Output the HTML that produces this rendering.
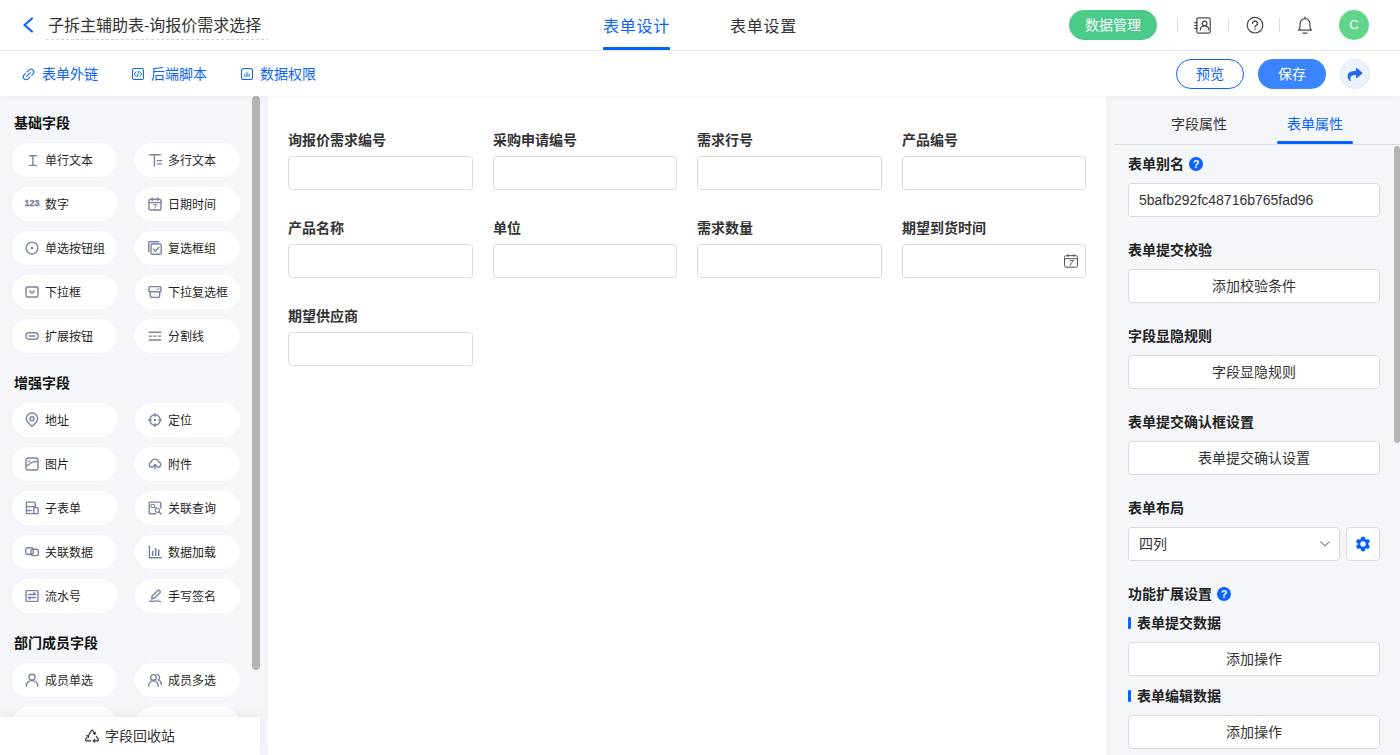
<!DOCTYPE html>
<html lang="zh-CN">
<head>
<meta charset="utf-8">
<title>表单设计</title>
<style>
*{box-sizing:border-box;margin:0;padding:0}
html,body{width:1400px;height:755px;overflow:hidden;background:#fff}
body{position:relative;font-family:"Liberation Sans","Noto Sans CJK SC",sans-serif;font-size:14px;color:#333;line-height:1}
.abs{position:absolute}
svg{display:block;overflow:visible}
/* header */
#hdr{position:absolute;left:0;top:0;width:1400px;height:51px;background:#fff;border-bottom:1px solid #ececec}
#title{position:absolute;left:48px;top:1px;height:50px;line-height:50px;font-size:16px;color:#333;white-space:nowrap}
#title-line{position:absolute;left:46px;top:39px;width:222px;height:1px;background:repeating-linear-gradient(90deg,#d4d4d4 0,#d4d4d4 3px,transparent 3px,transparent 5px)}
.tab{position:absolute;top:2px;height:50px;line-height:50px;font-size:16px;white-space:nowrap;letter-spacing:.75px}
.tab.on{color:#0a62ff}
#tabline{position:absolute;left:603px;top:47px;width:67px;height:3px;background:#0062ff;border-radius:1px}
#btn-data{position:absolute;left:1069px;top:10px;width:88px;height:30px;border-radius:15px;background:#4bcb8a;color:#fff;font-size:14px;line-height:30px;text-align:center}
.vsep{position:absolute;top:18px;width:1px;height:14px;background:#dcdcdc}
#avatar{position:absolute;left:1339px;top:10px;width:30px;height:30px;border-radius:50%;background:#61d68b;color:#fff;font-size:13px;line-height:30px;text-align:center}
/* toolbar */
#bar{position:absolute;left:0;top:51px;width:1400px;height:45px;background:#fff;box-shadow:0 1px 5px rgba(0,0,0,.05);z-index:5}
.lnk{position:absolute;top:1px;height:45px;line-height:45px;font-size:14px;color:#0a62ff;white-space:nowrap}
.lnk svg{position:absolute;top:16px}
#btn-prev{position:absolute;left:1176px;top:8px;width:68px;height:30px;border-radius:15px;border:1px solid #0a62ff;color:#0a62ff;font-size:14px;line-height:28px;text-align:center;background:#fff}
#btn-save{position:absolute;left:1258px;top:8px;width:68px;height:30px;border-radius:15px;background:#3a84ff;color:#fff;font-size:14px;line-height:30px;text-align:center}
#btn-share{position:absolute;left:1340px;top:8px;width:30px;height:30px;border-radius:50%;background:#ecf2ff;border:1px solid #dbe6ff}
/* left */
#left{position:absolute;left:0;top:96px;width:260px;height:659px;background:#f5f6fa;overflow:hidden}
#lscroll{position:absolute;left:252px;top:0;width:8px;height:574px;background:#b3b3b3;border-radius:4px}
.gt{position:absolute;left:14px;font-size:14px;font-weight:bold;color:#111;white-space:nowrap;height:20px;line-height:20px}
.pill{position:absolute;width:105px;height:34px;border-radius:17px;background:#fff;font-size:12px;line-height:36px;color:#1f1f1f;white-space:nowrap;padding-left:33px}
.pill.c1{left:12px}.pill.c2{left:135px}
.pill svg{position:absolute;left:13px;top:10px}
#recycle{position:absolute;left:0;top:717px;z-index:3;width:260px;height:38px;background:#fff;box-shadow:0 -3px 8px rgba(0,0,0,.06);font-size:14px;line-height:38px;color:#333}
/* canvas */
#gap{position:absolute;left:260px;top:96px;width:8px;height:659px;background:#f5f6fa}
#canvas{position:absolute;left:268px;top:96px;width:838px;height:659px;background:#fff}
.fl{position:absolute;font-size:14px;font-weight:bold;color:#333;white-space:nowrap;height:20px;line-height:20px}
.fi{position:absolute;width:185px;height:34px;border:1px solid #dbdbdb;border-radius:4px;background:#fff}
/* right */
#right{position:absolute;left:1106px;top:96px;width:294px;height:659px;background:#f5f6fa;overflow:hidden}
.rtab{position:absolute;top:18px;height:20px;line-height:20px;font-size:14px;white-space:nowrap;color:#333}
.rl{position:absolute;left:22px;font-size:14px;font-weight:bold;color:#222;white-space:nowrap;height:20px;line-height:20px}
.rb{position:absolute;left:22px;width:252px;height:34px;border:1px solid #dbdbdb;border-radius:4px;background:#fff;font-size:14px;line-height:32px;text-align:center;color:#333;white-space:nowrap}
.q{position:absolute;width:14px;height:14px;border-radius:50%;background:#0a62ff;color:#fff;font-size:11px;font-weight:bold;line-height:14px;text-align:center}
.sub{position:absolute;left:22px;font-size:14px;font-weight:bold;color:#222;white-space:nowrap;height:20px;line-height:20px;padding-left:9px}
.sub:before{content:"";position:absolute;left:0;top:4px;width:3px;height:12px;background:#0a62ff;border-radius:1px}
</style>
</head>
<body>
<!-- HEADER -->
<div id="hdr">
  <svg class="abs" style="left:22px;top:17px" width="12" height="16" viewBox="0 0 12 16"><path d="M10 1.5 L2.5 8 L10 14.5" fill="none" stroke="#0a62ff" stroke-width="2.2" stroke-linecap="round" stroke-linejoin="round"/></svg>
  <div id="title">子拆主辅助表-询报价需求选择</div>
  <div id="title-line"></div>
  <div class="tab on" style="left:603px">表单设计</div>
  <div class="tab" style="left:730px">表单设置</div>
  <div id="tabline"></div>
  <div id="btn-data">数据管理</div>
  <div class="vsep" style="left:1177px"></div>
  <div class="vsep" style="left:1228px"></div>
  <div class="vsep" style="left:1279px"></div>
<svg class="abs" style="left:1194px;top:17px" width="17" height="17" viewBox="0 0 17 17" fill="none" stroke="#4a4a4a" stroke-width="1.2" stroke-linecap="round" stroke-linejoin="round"><rect x="2.8" y="0.8" width="13.4" height="15.4" rx="1.8"/><path d="M0.6 5.7h2.6M0.6 8.5h2.6M0.6 11.3h2.6"/><circle cx="10.6" cy="6.4" r="2.3"/><path d="M6.4 12.8c0-2.4 1.8-3.8 4.2-3.8s4.2 1.4 4.2 3.8"/></svg>
<svg class="abs" style="left:1246px;top:16px" width="18" height="18" viewBox="0 0 18 18" fill="none" stroke="#4a4a4a" stroke-width="1.2" stroke-linecap="round" stroke-linejoin="round"><circle cx="9" cy="9.2" r="7.8"/><path d="M6.6 7.3a2.4 2.4 0 1 1 3.5 2.2c-0.8 0.4-1.1 0.9-1.1 1.6" stroke-width="1.4"/><circle cx="9" cy="13.3" r="0.8" fill="#4a4a4a" stroke="none"/></svg>
<svg class="abs" style="left:1297px;top:15px" width="16" height="20" viewBox="0 0 16 20" fill="none" stroke="#4a4a4a" stroke-width="1.2" stroke-linecap="round" stroke-linejoin="round"><path d="M1.6 15.2h12.8c-1.1-1.2-1.5-2.4-1.5-4.2V8.6a4.9 4.9 0 0 0-9.8 0V11c0 1.8-0.4 3-1.5 4.2z"/><path d="M8 3.4V1.8M6 18.2h4"/></svg>
  <div id="avatar">C</div>
</div>
<!-- TOOLBAR -->
<div id="bar">
  <div class="lnk" style="left:42px"><svg style="left:-20px" width="13" height="13" viewBox="0 0 14 14" fill="none" stroke="#0a62ff" stroke-width="1.1" stroke-linecap="round" stroke-linejoin="round"><path d="M5.4 4.2l2-2a3.1 3.1 0 0 1 4.4 4.4l-1.4 1.4M8.6 9.8l-2 2a3.1 3.1 0 0 1-4.4-4.4l1.4-1.4"/><path d="M4.9 9.1l4.2-4.2"/></svg>表单外链</div>
  <div class="lnk" style="left:151px"><svg style="left:-19px" width="12" height="12" viewBox="0 0 13 13" fill="none" stroke="#0a62ff" stroke-width="1.1" stroke-linecap="round" stroke-linejoin="round"><rect x="0.6" y="0.6" width="11.8" height="11.8" rx="1.6"/><path d="M4.5 4.2L2.3 6.5l2.2 2.3M8.5 4.2l2.2 2.3-2.2 2.3M7.3 3.6L5.7 9.4" stroke-width="1"/></svg>后端脚本</div>
  <div class="lnk" style="left:260px"><svg style="left:-19px" width="12" height="12" viewBox="0 0 13 13" fill="none" stroke="#0a62ff" stroke-width="1.1" stroke-linecap="round" stroke-linejoin="round"><rect x="0.6" y="0.6" width="11.8" height="11.8" rx="2.2"/><path d="M4.2 9.2V7M6.5 9.2V5M8.8 9.2V6.4"/></svg>数据权限</div>
  <div id="btn-prev">预览</div>
  <div id="btn-save">保存</div>
  <div id="btn-share"><svg style="position:absolute;left:6px;top:8px" width="16" height="13" viewBox="0 0 512 448"><path fill="#2468f2" d="M503.691 157.836L327.687 5.851C312.281-7.454 288 3.347 288 24.015v80.053C127.371 105.907 0 138.1 0 290.326c0 61.441 39.581 122.309 83.333 154.132 13.653 9.931 33.111-2.533 28.077-18.631C66.066 280.814 132.917 242.316 288 240.085V328c0 20.7 24.3 31.453 39.687 18.164l176.004-152c11.071-9.562 11.086-26.753 0-36.328z"/></svg></div>
</div>
<!-- LEFT -->
<div id="left">
  <div class="gt" style="top:17px">基础字段</div>
  <div class="pill c1" style="top:47px"><svg width="14" height="14" viewBox="0 0 14 14" fill="none" stroke="#7a83a3" stroke-width="1.4" stroke-linecap="round" stroke-linejoin="round"><path d="M4.5 2.7h6.8M4.5 12.4h6.8M7.9 2.7v9.7"/></svg>单行文本</div>
  <div class="pill c2" style="top:47px"><svg width="14" height="14" viewBox="0 0 14 14" fill="none" stroke="#7a83a3" stroke-width="1.4" stroke-linecap="round" stroke-linejoin="round"><path d="M1.8 1.8h10.6M6.4 1.8v11.2M9.2 7.6h4.4M9.2 10.9h4.4"/></svg>多行文本</div>
  <div class="pill c1" style="top:91px"><svg width="18" height="14" viewBox="0 0 18 14" style="left:12px"><text x="0.4" y="9.4" style="font:bold 9px 'Liberation Sans',sans-serif" fill="#7a83a3" stroke="#7a83a3" stroke-width="0.35">123</text></svg>数字</div>
  <div class="pill c2" style="top:91px"><svg width="14" height="14" viewBox="0 0 14 14" fill="none" stroke="#7a83a3" stroke-width="1.4" stroke-linecap="round" stroke-linejoin="round"><rect x="1" y="2.2" width="12" height="10.8" rx="1.8"/><path d="M1 5.6h12M4.2 0.9v2.6M9.8 0.9v2.6"/><path d="M5.8 7.6h2.6l-1.7 3.6" stroke-width="1"/></svg>日期时间</div>
  <div class="pill c1" style="top:135px"><svg width="14" height="14" viewBox="0 0 14 14" fill="none" stroke="#7a83a3" stroke-width="1.4" stroke-linecap="round" stroke-linejoin="round"><circle cx="7" cy="7" r="5.9"/><circle cx="7" cy="7" r="1.3" fill="#7a83a3" stroke="none"/></svg>单选按钮组</div>
  <div class="pill c2" style="top:135px"><svg width="14" height="14" viewBox="0 0 14 14" fill="none" stroke="#7a83a3" stroke-width="1.4" stroke-linecap="round" stroke-linejoin="round"><rect x="3" y="3" width="10.2" height="10.2" rx="1.2"/><path d="M0.8 10.6V1.8a1 1 0 0 1 1-1h8.8"/><path d="M5.4 8.1l2.1 2.1 3.4-4"/></svg>复选框组</div>
  <div class="pill c1" style="top:179px"><svg width="14" height="14" viewBox="0 0 14 14" fill="none" stroke="#7a83a3" stroke-width="1.4" stroke-linecap="round" stroke-linejoin="round"><rect x="1" y="2" width="12" height="10" rx="1.2"/><path d="M4.8 6l2.2 2.2L9.2 6"/></svg>下拉框</div>
  <div class="pill c2" style="top:179px"><svg width="14" height="14" viewBox="0 0 14 14" fill="none" stroke="#7a83a3" stroke-width="1.4" stroke-linecap="round" stroke-linejoin="round"><rect x="1" y="1.6" width="12" height="5.2" rx="1"/><path d="M2.3 6.8v3.6a2 2 0 0 0 2 2h5.4a2 2 0 0 0 2-2V6.8"/><path d="M8.6 3.9l1.1 1.1 1.8-2" stroke-width="1"/></svg>下拉复选框</div>
  <div class="pill c1" style="top:223px"><svg width="14" height="14" viewBox="0 0 14 14" fill="none" stroke="#7a83a3" stroke-width="1.4" stroke-linecap="round" stroke-linejoin="round"><rect x="0.8" y="3.8" width="12.4" height="6.4" rx="3.2"/><path d="M4 7h6"/></svg>扩展按钮</div>
  <div class="pill c2" style="top:223px"><svg width="14" height="14" viewBox="0 0 14 14" fill="none" stroke="#7a83a3" stroke-width="1.4" stroke-linecap="round" stroke-linejoin="round"><path d="M1.2 3.2h11.6M1.2 11h11.6M1.2 7.1h2.4M5.8 7.1h2.4M10.4 7.1h2.4"/></svg>分割线</div>
  <div class="gt" style="top:277px">增强字段</div>
  <div class="pill c1" style="top:307px"><svg width="14" height="14" viewBox="0 0 14 14" fill="none" stroke="#7a83a3" stroke-width="1.4" stroke-linecap="round" stroke-linejoin="round"><path d="M7 13.5C3.2 10 1.3 7.9 1.3 5.7a5.7 5.7 0 0 1 11.4 0C12.7 7.9 10.8 10 7 13.5z"/><circle cx="7" cy="5.7" r="2"/></svg>地址</div>
  <div class="pill c2" style="top:307px"><svg width="14" height="14" viewBox="0 0 14 14" fill="none" stroke="#7a83a3" stroke-width="1.4" stroke-linecap="round" stroke-linejoin="round"><circle cx="7" cy="7" r="5.2"/><path d="M7 0.6v2.6M7 10.8v2.6M0.6 7h2.6M10.8 7h2.6"/><circle cx="7" cy="7" r="1.2" fill="#7a83a3" stroke="none"/></svg>定位</div>
  <div class="pill c1" style="top:351px"><svg width="14" height="14" viewBox="0 0 14 14" fill="none" stroke="#7a83a3" stroke-width="1.4" stroke-linecap="round" stroke-linejoin="round"><rect x="1" y="1" width="12" height="12" rx="2"/><path d="M1.2 8.6c2-0.2 3.2-1.6 4.6-2.6 1.8-1.2 4-1.6 7-1.4"/><circle cx="4.2" cy="4.4" r="0.9" fill="#7a83a3" stroke="none"/></svg>图片</div>
  <div class="pill c2" style="top:351px"><svg width="14" height="14" viewBox="0 0 14 14" fill="none" stroke="#7a83a3" stroke-width="1.4" stroke-linecap="round" stroke-linejoin="round"><path d="M4.6 10.2H3.8a2.6 2.6 0 0 1-0.6-5.1 3.9 3.9 0 0 1 7.6 0 2.6 2.6 0 0 1-0.6 5.1H9.4"/><path d="M7 12V7.6M5.2 9.2L7 7.4l1.8 1.8"/></svg>附件</div>
  <div class="pill c1" style="top:395px"><svg width="14" height="14" viewBox="0 0 14 14" fill="none" stroke="#7a83a3" stroke-width="1.4" stroke-linecap="round" stroke-linejoin="round"><path d="M10.2 6.4V2a0.9 0.9 0 0 0-0.9-0.9H2.3A0.9 0.9 0 0 0 1.4 2v9.7a0.9 0.9 0 0 0 0.9 0.9h6.5"/><path d="M1.4 5.6h8.8"/><rect x="8.8" y="6.6" width="4.3" height="6" rx="0.9"/><path d="M1.6 9.5h4.6"/></svg>子表单</div>
  <div class="pill c2" style="top:395px"><svg width="14" height="14" viewBox="0 0 14 14" fill="none" stroke="#7a83a3" stroke-width="1.4" stroke-linecap="round" stroke-linejoin="round"><path d="M12.8 7V2a0.9 0.9 0 0 0-0.9-0.9H2.1A0.9 0.9 0 0 0 1.2 2v9.8a0.9 0.9 0 0 0 0.9 0.9h5.4"/><rect x="3.4" y="3.4" width="3" height="3" stroke-width="1"/><path d="M6.4 6.4h2.2" stroke-width="1"/><circle cx="9.4" cy="9.3" r="2.1" stroke-width="1.1"/><path d="M11 10.9l2.2 2.2"/></svg>关联查询</div>
  <div class="pill c1" style="top:439px"><svg width="14" height="14" viewBox="0 0 14 14" fill="none" stroke="#7a83a3" stroke-width="1.4" stroke-linecap="round" stroke-linejoin="round"><rect x="0.7" y="2.8" width="7.5" height="6.4" rx="1.8"/><rect x="5.9" y="4.2" width="7.5" height="6.4" rx="1.8"/></svg>关联数据</div>
  <div class="pill c2" style="top:439px"><svg width="14" height="14" viewBox="0 0 14 14" fill="none" stroke="#7a83a3" stroke-width="1.4" stroke-linecap="round" stroke-linejoin="round"><path d="M1.4 1v11.8h11.8"/><path d="M4.7 6.4v4M7.7 3.8v6.6M10.7 5v5.4" stroke-width="1.6"/></svg>数据加载</div>
  <div class="pill c1" style="top:483px"><svg width="14" height="14" viewBox="0 0 14 14" fill="none" stroke="#7a83a3" stroke-width="1.4" stroke-linecap="round" stroke-linejoin="round"><rect x="1" y="1.6" width="12" height="10.8" rx="1"/><path d="M3.6 5.4h6.8M8.8 3.8l1.6 1.6M10.4 8.4H3.6M5.2 10L3.6 8.4" stroke-width="1.5"/></svg>流水号</div>
  <div class="pill c2" style="top:483px"><svg width="14" height="14" viewBox="0 0 14 14" fill="none" stroke="#7a83a3" stroke-width="1.4" stroke-linecap="round" stroke-linejoin="round"><path d="M3.6 9.8l0.5-2.6 6-5.9a0.8 0.8 0 0 1 1.1 0l1 1a0.8 0.8 0 0 1 0 1.1l-6 5.9z"/><path d="M1.6 12.4c1.6-1.2 2.6 0.8 4.4-0.2 1.6-0.8 3.6-0.4 6.6 0.4"/></svg>手写签名</div>
  <div class="gt" style="top:537px">部门成员字段</div>
  <div class="pill c1" style="top:567px"><svg width="14" height="14" viewBox="0 0 14 14" fill="none" stroke="#7a83a3" stroke-width="1.4" stroke-linecap="round" stroke-linejoin="round"><circle cx="7" cy="4.2" r="3"/><path d="M1.2 13.2c0-3.4 2.6-5.6 5.8-5.6s5.8 2.2 5.8 5.6"/></svg>成员单选</div>
  <div class="pill c2" style="top:567px"><svg width="14" height="14" viewBox="0 0 14 14" fill="none" stroke="#7a83a3" stroke-width="1.4" stroke-linecap="round" stroke-linejoin="round"><circle cx="5.4" cy="4.4" r="2.8"/><path d="M0.6 13.2c0-3.2 2.2-5.4 4.8-5.4s4.8 2.2 4.8 5.4"/><path d="M8.6 1.6a2.8 2.8 0 0 1 1.6 5.2c2 0.6 3.2 2.6 3.2 5"/></svg>成员多选</div>
  <div class="pill c1" style="top:611px"></div>
  <div class="pill c2" style="top:611px"></div>
  <div id="lscroll"></div>
</div>
<div id="gap"></div>
<div id="recycle"><svg style="position:absolute;left:85px;top:12px" width="14" height="13" viewBox="0 0 14 13" fill="none" stroke="#333" stroke-width="1.2" stroke-linecap="round" stroke-linejoin="round"><path d="M3.4 6.8L6.3 1.6a0.9 0.9 0 0 1 1.6 0l2 3.4"/><path d="M11.3 7.2l2 3.2a0.9 0.9 0 0 1-0.8 1.4H8.4"/><path d="M5.8 11.8H1.5a0.9 0.9 0 0 1-0.8-1.4L2.2 8"/><path d="M10.6 3.4l-0.6 1.8-1.8-0.6M9.8 10.4l-1.5 1.4 1.5 1.3M1.6 6.8l1.8-0.2 0.2 1.8" stroke-width="1.1"/></svg><span style="position:absolute;left:105px;top:0">字段回收站</span></div>

<!-- CANVAS -->
<div id="canvas">
  <div class="fl" style="left:20px;top:34px">询报价需求编号</div>
  <div class="fi" style="width:185px;left:20px;top:60px"></div>
  <div class="fl" style="left:225px;top:34px">采购申请编号</div>
  <div class="fi" style="width:184px;left:225px;top:60px"></div>
  <div class="fl" style="left:429px;top:34px">需求行号</div>
  <div class="fi" style="width:185px;left:429px;top:60px"></div>
  <div class="fl" style="left:634px;top:34px">产品编号</div>
  <div class="fi" style="width:184px;left:634px;top:60px"></div>
  <div class="fl" style="left:20px;top:122px">产品名称</div>
  <div class="fi" style="width:185px;left:20px;top:148px"></div>
  <div class="fl" style="left:225px;top:122px">单位</div>
  <div class="fi" style="width:184px;left:225px;top:148px"></div>
  <div class="fl" style="left:429px;top:122px">需求数量</div>
  <div class="fi" style="width:185px;left:429px;top:148px"></div>
  <div class="fl" style="left:634px;top:122px">期望到货时间</div>
  <div class="fi" style="width:184px;left:634px;top:148px"><svg style="position:absolute;left:160.5px;top:8.5px" width="15" height="15" viewBox="0 0 15 15"><rect x="0.5" y="1.6" width="13" height="11.6" rx="1.8" fill="none" stroke="#555" stroke-width="1"/><path d="M4.1 0.2v2.8M9.9 0.2v2.8M0.5 4.7h13" stroke="#555" stroke-width="1" fill="none"/><text x="7" y="12" text-anchor="middle" fill="#444" style="font:italic 8.5px 'Liberation Sans',sans-serif">7</text></svg></div>
  <div class="fl" style="left:20px;top:210px">期望供应商</div>
  <div class="fi" style="width:185px;left:20px;top:236px"></div>
</div>
<!-- RIGHT -->
<div id="right">
  <div class="rtab" style="left:65px">字段属性</div>
  <div class="rtab" style="left:181px;color:#0a62ff">表单属性</div>
  <div class="abs" style="left:8px;top:48px;width:286px;height:1px;background:#dcdcdc"></div>
  <div class="abs" style="left:171px;top:45px;width:76px;height:3px;background:#0062ff;border-radius:1.5px"></div>
  <div class="abs" style="left:288px;top:50px;width:6px;height:297px;background:#b4b4b4;border-radius:3px"></div>
  <div class="rl" style="top:58px">表单别名</div><div class="q" style="left:83px;top:61px">?</div>
  <div class="rb" style="top:87px;text-align:left;padding-left:10px;font-family:'Liberation Sans',sans-serif">5bafb292fc48716b765fad96</div>
  <div class="rl" style="top:144px">表单提交校验</div>
  <div class="rb" style="top:173px">添加校验条件</div>
  <div class="rl" style="top:230px">字段显隐规则</div>
  <div class="rb" style="top:259px">字段显隐规则</div>
  <div class="rl" style="top:316px">表单提交确认框设置</div>
  <div class="rb" style="top:345px">表单提交确认设置</div>
  <div class="rl" style="top:402px">表单布局</div>
  <div class="rb" style="top:431px;width:212px;text-align:left;padding-left:10px">四列<svg style="position:absolute;left:191px;top:13px" width="10" height="6" viewBox="0 0 10 6"><path d="M0.6 0.6L5 5l4.4-4.4" fill="none" stroke="#8a8a8a" stroke-width="1.1" stroke-linecap="round" stroke-linejoin="round"/></svg></div>
  <div class="rb" style="top:431px;left:240px;width:34px"><svg style="position:absolute;left:7px;top:7px" width="18" height="18" viewBox="0 0 24 24"><path fill="#0062ff" d="M19.14 12.94c.04-.3.06-.61.06-.94 0-.32-.02-.64-.07-.94l2.03-1.58a.49.49 0 0 0 .12-.61l-1.92-3.32a.49.49 0 0 0-.59-.22l-2.39.96c-.5-.38-1.03-.7-1.62-.94l-.36-2.54a.484.484 0 0 0-.48-.41h-3.84c-.24 0-.43.17-.47.41l-.36 2.54c-.59.24-1.13.57-1.62.94l-2.39-.96c-.22-.08-.47 0-.59.22L2.74 8.87c-.12.21-.08.47.12.61l2.03 1.58c-.05.3-.09.63-.09.94s.02.64.07.94l-2.03 1.58a.49.49 0 0 0-.12.61l1.92 3.32c.12.22.37.29.59.22l2.39-.96c.5.38 1.03.7 1.62.94l.36 2.54c.05.24.24.41.48.41h3.84c.24 0 .44-.17.47-.41l.36-2.54c.59-.24 1.13-.56 1.62-.94l2.39.96c.22.08.47 0 .59-.22l1.92-3.32c.12-.22.07-.47-.12-.61l-2.01-1.58zM12 15.6A3.6 3.6 0 1 1 12 8.4a3.6 3.6 0 0 1 0 7.2z"/></svg></div>
  <div class="rl" style="top:488px">功能扩展设置</div><div class="q" style="left:111px;top:491px">?</div>
  <div class="sub" style="top:517px">表单提交数据</div>
  <div class="rb" style="top:546px">添加操作</div>
  <div class="sub" style="top:590px">表单编辑数据</div>
  <div class="rb" style="top:619px">添加操作</div>
</div>
</body>
</html>
